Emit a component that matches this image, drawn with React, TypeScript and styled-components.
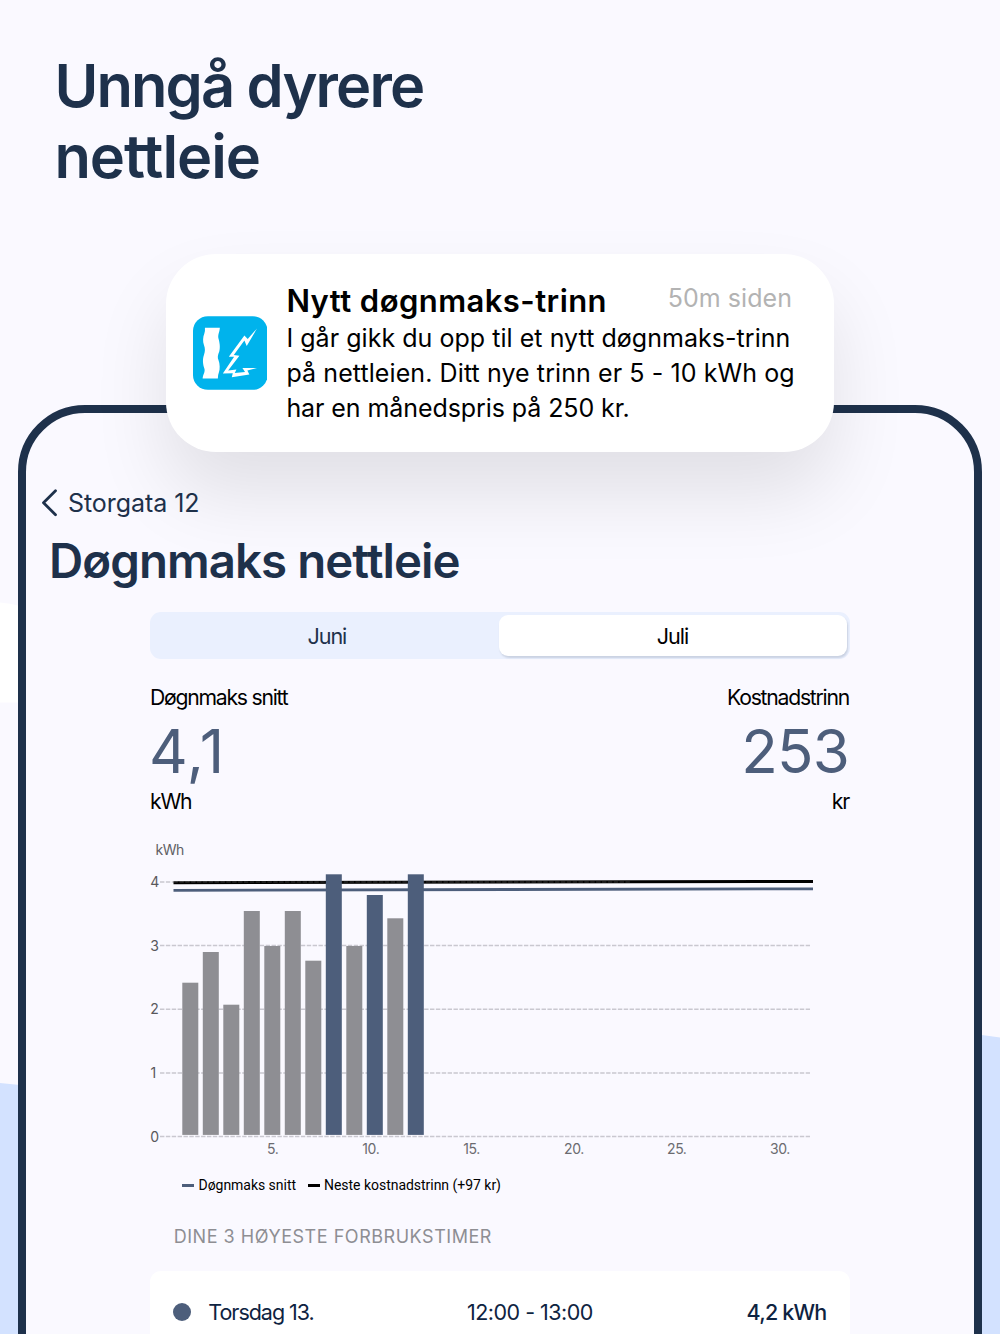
import React from 'react';
import styled, { createGlobalStyle } from 'styled-components';

const colors = {
  bg: '#faf9ff',
  navy: '#1e314b',
  slate: '#4d5e7b',
  grey: '#8e8e93',
  sky: '#d3e2ff',
};

const GlobalStyle = createGlobalStyle`
  * { box-sizing: border-box; }
  body { margin: 0; background: ${colors.bg}; font-family: Inter, "Liberation Sans", sans-serif; }
  h1, h2, h3, p { margin: 0; font-weight: inherit; }
`;

const Page = styled.main`
  position: relative;
  display: flex;
  flex-direction: column;
  width: 1000px;
  height: 1334px;
  overflow: hidden;
  background: ${colors.bg};
`;

const Backdrop = styled.svg`
  position: absolute;
  inset: 0;
`;

const Line = styled.span<{ $spacing: number }>`
  display: block;
  white-space: nowrap;
  letter-spacing: ${(p) => p.$spacing}px;
`;

const Headline = styled.h1`
  position: relative;
  height: 405px;
  flex: none;
  padding: 50px 0 0 54.4px;
  font-size: 59.6px;
  font-weight: 600;
  line-height: 71px;
  color: ${colors.navy};
`;

const Phone = styled.section`
  position: relative;
  display: flex;
  flex-direction: column;
  flex: none;
  margin: 0 18px;
  height: 1000px;
  padding-top: 73.5px;
  border: 8px solid ${colors.navy};
  border-radius: 67px 67px 0 0;
  background: ${colors.bg};
`;

const BackLink = styled.div`
  display: flex;
  align-items: center;
  height: 30px;
  gap: 9px;
  padding-left: 15px;
  font-size: 25px;
  line-height: 30px;
  letter-spacing: -0.06px;
  color: ${colors.navy};
`;

const BackLabel = styled.span`
  padding-top: 2px;
`;

const ScreenTitle = styled.h2`
  margin-top: 15.5px;
  padding-left: 23px;
  font-size: 47.4px;
  font-weight: 600;
  line-height: 58px;
  letter-spacing: -0.93px;
  color: ${colors.navy};
`;

const Content = styled.div`
  display: flex;
  flex-direction: column;
  width: 700px;
  margin: 22px 0 0 124px;
`;

const Segments = styled.div`
  display: grid;
  grid-template-columns: 1fr 348.5px;
  height: 46.5px;
  padding: 3px 2.8px 2.8px 3px;
  border-radius: 11px;
  background: #eaf0fe;
`;

const Segment = styled.div<{ $active?: boolean }>`
  display: flex;
  align-items: center;
  justify-content: center;
  padding: ${(p) => (p.$active ? '1.5px 1px 0 0' : '1.5px 0 0 2px')};
  border-radius: 9px;
  font-size: 21.6px;
  letter-spacing: -1.05px;
  color: ${(p) => (p.$active ? '#000' : colors.navy)};
  background: ${(p) => (p.$active ? '#fff' : 'transparent')};
  box-shadow: ${(p) => (p.$active ? '1px 2px 2px rgba(30, 49, 75, 0.16)' : 'none')};
`;

const Metrics = styled.div`
  display: flex;
  justify-content: space-between;
  margin-top: 25.5px;
`;

const Metric = styled.div<{ $end?: boolean }>`
  display: flex;
  flex-direction: column;
  align-items: ${(p) => (p.$end ? 'flex-end' : 'flex-start')};
  padding-right: ${(p) => (p.$end ? 1 : 0)}px;
`;

const MetricLabel = styled.div`
  font-size: 21.2px;
  line-height: 26px;
  letter-spacing: -1.25px;
  color: #000;
`;

const MetricValue = styled.div<{ $spacing: number }>`
  margin: 5px 0 1px -1px;
  font-size: 60px;
  line-height: 72px;
  letter-spacing: ${(p) => p.$spacing}px;
  color: ${colors.slate};
`;

const MetricUnit = styled(MetricLabel)`
  letter-spacing: -1.2px;
`;

const Chart = styled.svg`
  display: block;
  margin-top: 16px;
  overflow: visible;
`;

const Legend = styled.div`
  display: flex;
  align-items: center;
  height: 20px;
  margin-top: 15px;
  padding-left: 32.3px;
  font-family: Roboto, "Liberation Sans", sans-serif;
  font-size: 14px;
  line-height: 20px;
  letter-spacing: -0.03px;
  color: #000;
`;

const LegendItem = styled.span`
  display: flex;
  align-items: center;
  gap: 4.2px;
  margin-right: 11.8px;
`;

const LegendMark = styled.i<{ $color: string }>`
  width: 12px;
  height: 3px;
  background: ${(p) => p.$color};
`;

const SectionTitle = styled.h3`
  margin-top: 30.5px;
  padding-left: 23.7px;
  font-size: 18px;
  line-height: 22px;
  letter-spacing: 0.53px;
  color: ${colors.grey};
`;

const HourList = styled.div`
  height: 160px;
  margin-top: 23.5px;
  padding-top: 28px;
  border-radius: 11px;
  background: #fff;
`;

const HourRow = styled.div`
  display: grid;
  grid-template-columns: 35.3px 258.7px 1fr auto;
  align-items: center;
  padding: 0 23.6px 0 23px;
  font-size: 21.5px;
  line-height: 26px;
  color: #0e2341;
`;

const Dot = styled.i`
  width: 18px;
  height: 18px;
  border-radius: 50%;
  background: ${colors.slate};
`;

const HourCell = styled.span<{ $spacing: number; $strong?: boolean }>`
  font-weight: ${(p) => (p.$strong ? 500 : 400)};
  letter-spacing: ${(p) => p.$spacing}px;
`;

const Notification = styled.aside`
  position: absolute;
  top: 253.5px;
  left: 165.7px;
  display: flex;
  width: 668.6px;
  height: 198.7px;
  padding-left: 27px;
  border-radius: 50px;
  background: #fff;
  box-shadow: 0 42px 76px rgba(0, 0, 0, 0.1);
`;

const AppIcon = styled.svg`
  flex: none;
  margin-top: 62.5px;
`;

const Message = styled.div`
  flex: 1;
  min-width: 0;
  padding: 29px 42.3px 0 19.1px;
`;

const MessageHead = styled.div`
  display: flex;
  justify-content: space-between;
  height: 38px;
`;

const MessageTitle = styled.strong`
  font-size: 31px;
  font-weight: 600;
  line-height: 36px;
  letter-spacing: 0.44px;
`;

const MessageTime = styled.time`
  font-size: 25px;
  line-height: 31px;
  letter-spacing: 0.05px;
  color: #b3b3b3;
`;

const MessageBody = styled.p`
  font-size: 25px;
  line-height: 35.1px;
`;

const bars = [
  { top: 152.7 }, { top: 122 }, { top: 174.7 }, { top: 81 }, { top: 116 }, { top: 81 },
  { top: 130.7 }, { top: 44.3, peak: true }, { top: 116 }, { top: 65, peak: true },
  { top: 88.3 }, { top: 44.3, peak: true },
];

const gridLines = [
  { label: '4', y: 52 }, { label: '3', y: 115.5 }, { label: '2', y: 179.3 },
  { label: '1', y: 243 }, { label: '0', y: 306.6 },
];

const days = [
  { label: '5.', x: 117 }, { label: '10.', x: 212.3 }, { label: '15.', x: 313.3 },
  { label: '20.', x: 414 }, { label: '25.', x: 517 }, { label: '30.', x: 620 },
];

function UsageChart() {
  return (
    <Chart width="700" height="330" viewBox="0 0 700 330" fontFamily="Inter, sans-serif" fontSize="14">
      <text x="5.6" y="24.5" fill="#606064" letterSpacing="-0.5">kWh</text>
      {gridLines.map((g) => (
        <g key={g.label}>
          <text x={g.label === '1' ? 0.4 : 0.2} y={g.y + 5} fill="#58585c">{g.label}</text>
          <line x1="10" y1={g.y} x2="660" y2={g.y} stroke="#c9c8d0" strokeWidth="1.5" strokeDasharray="4.4 1.47" />
        </g>
      ))}
      <line x1="23.5" y1="52.8" x2="663" y2="51.4" stroke="#000" strokeWidth="3" />
      <line x1="23.5" y1="52" x2="480" y2="52" stroke="#fff" strokeOpacity="0.2" strokeWidth="1" strokeDasharray="4.4 1.47" />
      <line x1="23.5" y1="60.3" x2="663" y2="58.8" stroke={colors.slate} strokeWidth="2.8" />
      {bars.map((b, i) => (
        <rect key={i} x={32.3 + i * 20.5} y={b.top} width="16" height={304.9 - b.top}
          fill={b.peak ? colors.slate : colors.grey} />
      ))}
      {days.map((d) => (
        <text key={d.label} x={d.x} y="323.7" fill="#6b6b70" letterSpacing="-0.4">{d.label}</text>
      ))}
    </Chart>
  );
}

export default function App() {
  return (
    <Page>
      <GlobalStyle />
      <Backdrop width="1000" height="1334" viewBox="0 0 1000 1334">
        <path d="M0 602.5 Q10 603 20 606 V702.5 H0 Z" fill="#fff" />
        <path d="M0 1083 L20 1085 V1334 H0 Z" fill={colors.sky} />
        <path d="M980 1034.7 L1000 1037.5 V1334 H980 Z" fill={colors.sky} />
      </Backdrop>

      <Headline>
        <Line $spacing={-1.85}>Unngå dyrere</Line>
        <Line $spacing={-1}>nettleie</Line>
      </Headline>

      <Phone>
        <BackLink>
          <svg width="18" height="30" viewBox="0 0 18 30" fill="none" stroke={colors.navy} strokeWidth="2.8" strokeLinecap="round" strokeLinejoin="round">
            <path d="M14.5 3.7 L2.5 15.7 L14.5 27.8" />
          </svg>
          <BackLabel>Storgata 12</BackLabel>
        </BackLink>
        <ScreenTitle>Døgnmaks nettleie</ScreenTitle>
        <Content>
          <Segments>
            <Segment>Juni</Segment>
            <Segment $active>Juli</Segment>
          </Segments>
          <Metrics>
            <Metric>
              <MetricLabel>Døgnmaks snitt</MetricLabel>
              <MetricValue $spacing={1}>4,1</MetricValue>
              <MetricUnit>kWh</MetricUnit>
            </Metric>
            <Metric $end>
              <MetricLabel>Kostnadstrinn</MetricLabel>
              <MetricValue $spacing={-0.8}>253</MetricValue>
              <MetricUnit>kr</MetricUnit>
            </Metric>
          </Metrics>
          <UsageChart />
          <Legend>
            <LegendItem><LegendMark $color={colors.slate} />Døgnmaks snitt</LegendItem>
            <LegendItem><LegendMark $color="#000" />Neste kostnadstrinn (+97 kr)</LegendItem>
          </Legend>
          <SectionTitle>DINE 3 HØYESTE FORBRUKSTIMER</SectionTitle>
          <HourList>
            <HourRow>
              <Dot />
              <HourCell $spacing={-1.03}>Torsdag 13.</HourCell>
              <HourCell $spacing={-0.51}>12:00 - 13:00</HourCell>
              <HourCell $spacing={-0.8} $strong>4,2 kWh</HourCell>
            </HourRow>
          </HourList>
        </Content>
      </Phone>

      <Notification>
        <AppIcon width="74.6" height="74" viewBox="126 228 225 222">
          <rect x="126" y="228" width="225" height="222" rx="45" fill="#00b3ec" />
          <path fill="#fff" d="M162 263 H207 C206 277 200 285 203 296 C206 306 209 322 205 335 C201 345 199 352 203 361 C207 371 208 388 204 398 Q201 405 201 416 H155 C156 403 164 396 160 385 C156 374 154 358 159 345 C163 334 163 326 159 315 C155 304 156 290 160 281 Q163 275 162 263 Z" />
          <path fill="#fff" d="M319 265 L291 297 L281 286 L234 350 L250 350 L216 401 L246 400 L243 412 L296 404 L290 392 L319 384 L275 384 L283 396 L252 399 L257 389 L232 392 L266 347 L249 345 L281 301 L288 318 Z" />
        </AppIcon>
        <Message>
          <MessageHead>
            <MessageTitle>Nytt døgnmaks-trinn</MessageTitle>
            <MessageTime>50m siden</MessageTime>
          </MessageHead>
          <MessageBody>
            <Line $spacing={0.04}>I går gikk du opp til et nytt døgnmaks-trinn</Line>
            <Line $spacing={0.09}>på nettleien. Ditt nye trinn er 5 - 10 kWh og</Line>
            <Line $spacing={-0.08}>har en månedspris på 250 kr.</Line>
          </MessageBody>
        </Message>
      </Notification>
    </Page>
  );
}
